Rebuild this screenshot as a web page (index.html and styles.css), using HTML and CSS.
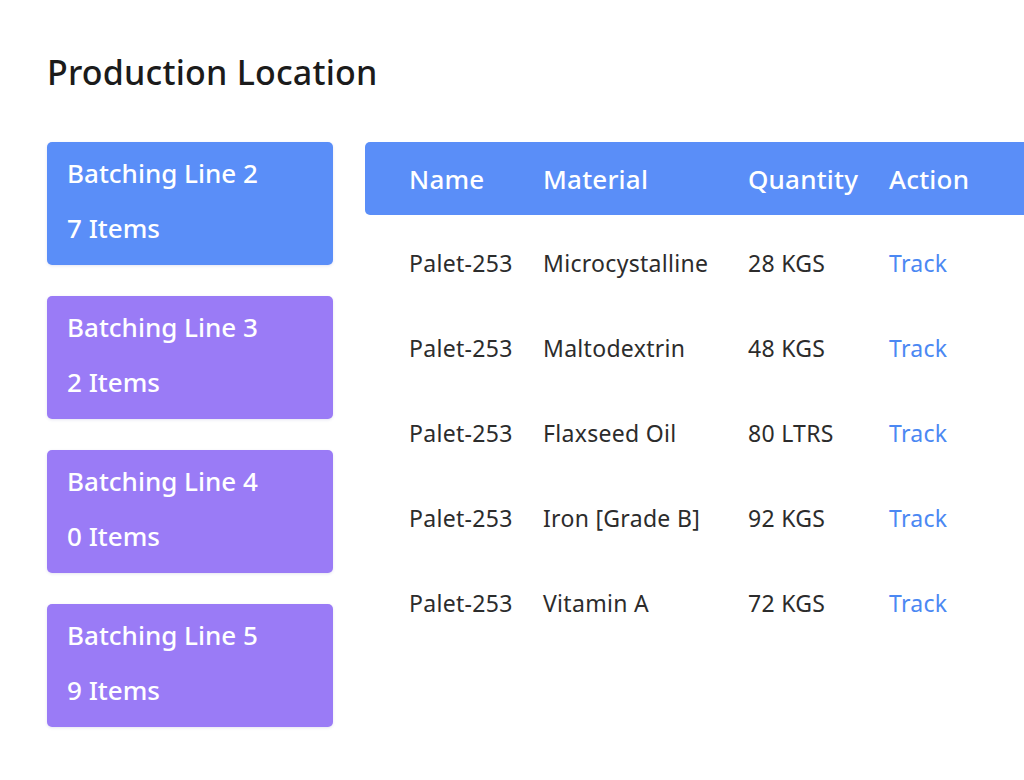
FILE: index.html
```html
<!DOCTYPE html>
<html>
<head>
<meta charset="utf-8">
<link rel="stylesheet" href="styles.css">
</head>
<body>
<div class="page">
  <h1 class="title">Production Location</h1>
  <div class="main">
    <div class="lines">
      <div class="line blue"><div class="line-name">Batching Line 2</div><div class="line-count">7 Items</div></div>
      <div class="line purple"><div class="line-name">Batching Line 3</div><div class="line-count">2 Items</div></div>
      <div class="line purple"><div class="line-name">Batching Line 4</div><div class="line-count">0 Items</div></div>
      <div class="line purple"><div class="line-name">Batching Line 5</div><div class="line-count">9 Items</div></div>
    </div>
    <div class="table">
      <div class="row head">
        <div class="c1">Name</div><div class="c2">Material</div><div class="c3">Quantity</div><div class="c4">Action</div>
      </div>
      <div class="row">
        <div class="c1">Palet-253</div><div class="c2">Microcystalline</div><div class="c3">28 KGS</div><div class="c4 track">Track</div>
      </div>
      <div class="row">
        <div class="c1">Palet-253</div><div class="c2">Maltodextrin</div><div class="c3">48 KGS</div><div class="c4 track">Track</div>
      </div>
      <div class="row">
        <div class="c1">Palet-253</div><div class="c2">Flaxseed Oil</div><div class="c3">80 LTRS</div><div class="c4 track">Track</div>
      </div>
      <div class="row">
        <div class="c1">Palet-253</div><div class="c2">Iron [Grade B]</div><div class="c3">92 KGS</div><div class="c4 track">Track</div>
      </div>
      <div class="row">
        <div class="c1">Palet-253</div><div class="c2">Vitamin A</div><div class="c3">72 KGS</div><div class="c4 track">Track</div>
      </div>
    </div>
  </div>
</div>
</body>
</html>
```

FILE: styles.css
```css
html, body {
  margin: 0;
  padding: 0;
  background: #ffffff;
  overflow: hidden;
}
body {
  font-family: "Noto Sans", "DejaVu Sans", sans-serif;
  width: 1024px;
  height: 780px;
}
.page {
  padding: 50px 0 0 47px;
}
.title {
  margin: 0;
  font-size: 34px;
  font-weight: 500;
  color: #1b1b1b;
  line-height: 44px;
  letter-spacing: 0.2px;
}
.main {
  display: flex;
  gap: 32px;
  margin-top: 48px;
}
.lines {
  display: flex;
  flex-direction: column;
  gap: 31px;
  width: 286px;
  flex: none;
}
.line {
  height: 123px;
  box-sizing: border-box;
  border-radius: 5px;
  color: #ffffff;
  padding: 14px 20px 0;
  box-shadow: 0 1px 3px rgba(80, 80, 160, 0.15);
}
.line.blue { background: #5a8ef8; }
.line.purple { background: #9a7bf6; }
.line-name {
  font-size: 26px;
  font-weight: 500;
  line-height: 34px;
}
.line-count {
  font-size: 26px;
  font-weight: 500;
  line-height: 34px;
  margin-top: 21px;
}
.table {
  width: 720px;
  flex: none;
}
.row {
  display: flex;
  align-items: center;
  height: 85px;
  padding-left: 44px;
  font-size: 23px;
  letter-spacing: 0.3px;
  color: #2c2c2c;
}
.row.head {
  height: 73px;
  background: #5a8ef8;
  border-radius: 5px 0 0 5px;
  color: #ffffff;
  font-size: 26px;
  font-weight: 500;
  letter-spacing: 0.2px;
  margin-bottom: 5px;
}
.c1 { width: 134px; flex: none; }
.c2 { width: 205px; flex: none; }
.c3 { width: 141px; flex: none; }
.c4 { flex: 1; }
.track { color: #4b88f3; }
```
